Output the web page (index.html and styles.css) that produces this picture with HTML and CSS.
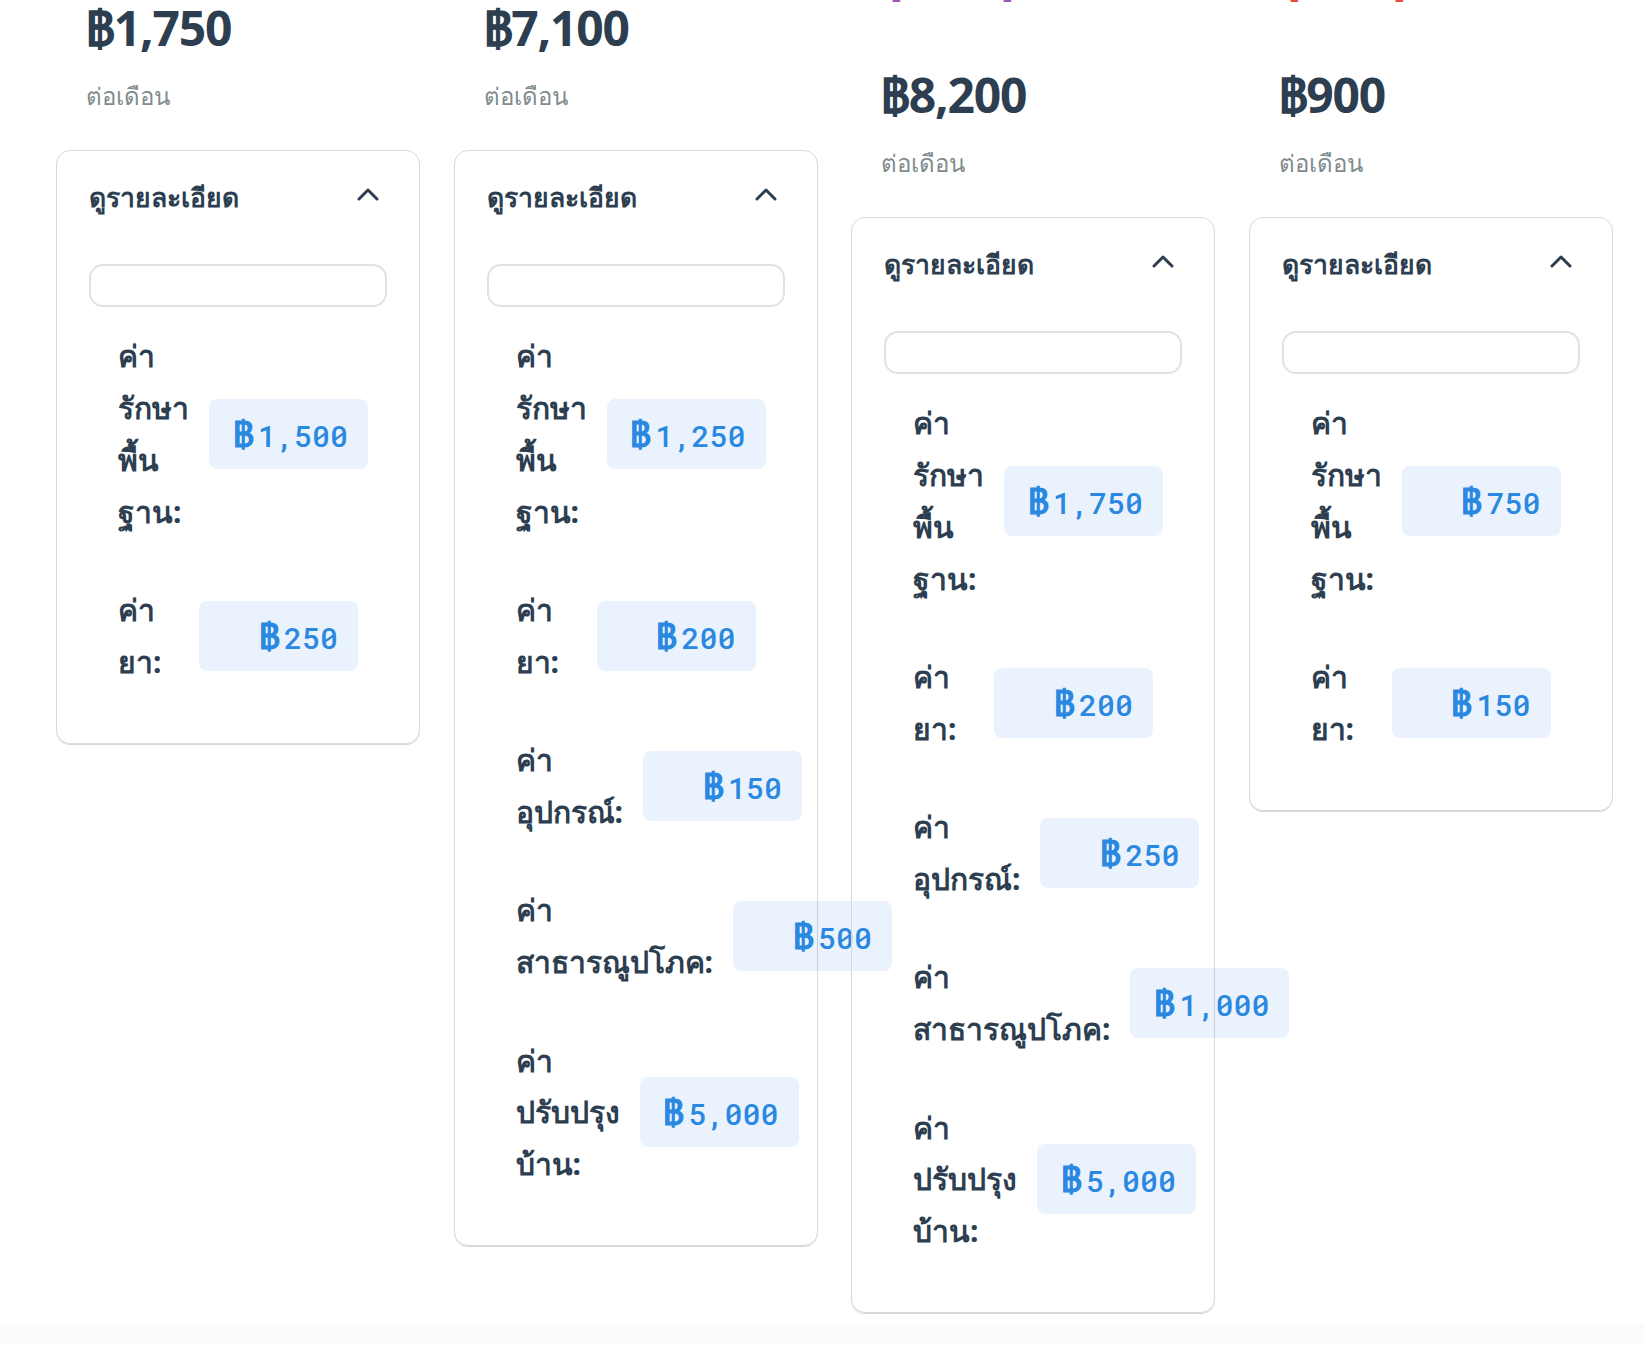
FILE: index.html
```html
<!DOCTYPE html>
<html lang="th">
<head>
<meta charset="utf-8">
<title>แพ็กเกจดูแล</title>
<link rel="stylesheet" href="styles.css">
</head>
<body>
<main class="board">
  <section class="plan">
    <div class="plan-top">
      <h3 class="plan-name name-blue">แพ็กเกจพื้นฐาน</h3>
      <div class="price">฿1,750</div>
      <div class="per">ต่อเดือน</div>
    </div>
    <div class="details">
      <div class="details-head"><span>ดูรายละเอียด</span><svg class="chev" width="22" height="14" viewBox="0 0 22 14"><polyline points="2,12 11,3 20,12" fill="none" stroke="#2c3e50" stroke-width="3" stroke-linecap="round" stroke-linejoin="round"/></svg></div>
      <div class="search"></div>
      <div class="row"><span class="label">ค่า รักษา พื้น ฐาน:</span><span class="value"><span class="cur">฿</span>1,500</span></div>
      <div class="row"><span class="label">ค่า ยา:</span><span class="value"><span class="cur">฿</span>250</span></div>
    </div>
  </section>

  <section class="plan">
    <div class="plan-top">
      <h3 class="plan-name name-green">แพ็กเกจครอบครัว</h3>
      <div class="price">฿7,100</div>
      <div class="per">ต่อเดือน</div>
    </div>
    <div class="details">
      <div class="details-head"><span>ดูรายละเอียด</span><svg class="chev" width="22" height="14" viewBox="0 0 22 14"><polyline points="2,12 11,3 20,12" fill="none" stroke="#2c3e50" stroke-width="3" stroke-linecap="round" stroke-linejoin="round"/></svg></div>
      <div class="search"></div>
      <div class="row"><span class="label">ค่า รักษา พื้น ฐาน:</span><span class="value"><span class="cur">฿</span>1,250</span></div>
      <div class="row"><span class="label">ค่า ยา:</span><span class="value"><span class="cur">฿</span>200</span></div>
      <div class="row"><span class="label">ค่า อุปกรณ์:</span><span class="value"><span class="cur">฿</span>150</span></div>
      <div class="row"><span class="label">ค่า สาธารณูปโภค:</span><span class="value"><span class="cur">฿</span>500</span></div>
      <div class="row"><span class="label">ค่า ปรับปรุง บ้าน:</span><span class="value"><span class="cur">฿</span>5,000</span></div>
    </div>
  </section>

  <section class="plan">
    <div class="plan-top">
      <div class="badge badge-purple">แนะนำ</div>
      <h3 class="plan-name name-purple">ดูแลเต็มรูปแบบ</h3>
      <div class="price">฿8,200</div>
      <div class="per">ต่อเดือน</div>
    </div>
    <div class="details">
      <div class="details-head"><span>ดูรายละเอียด</span><svg class="chev" width="22" height="14" viewBox="0 0 22 14"><polyline points="2,12 11,3 20,12" fill="none" stroke="#2c3e50" stroke-width="3" stroke-linecap="round" stroke-linejoin="round"/></svg></div>
      <div class="search"></div>
      <div class="row"><span class="label">ค่า รักษา พื้น ฐาน:</span><span class="value"><span class="cur">฿</span>1,750</span></div>
      <div class="row"><span class="label">ค่า ยา:</span><span class="value"><span class="cur">฿</span>200</span></div>
      <div class="row"><span class="label">ค่า อุปกรณ์:</span><span class="value"><span class="cur">฿</span>250</span></div>
      <div class="row"><span class="label">ค่า สาธารณูปโภค:</span><span class="value"><span class="cur">฿</span>1,000</span></div>
      <div class="row"><span class="label">ค่า ปรับปรุง บ้าน:</span><span class="value"><span class="cur">฿</span>5,000</span></div>
    </div>
  </section>

  <section class="plan">
    <div class="plan-top">
      <div class="badge badge-red">ประหยัด</div>
      <h3 class="plan-name name-red">ดูแลขั้นสูง</h3>
      <div class="price">฿900</div>
      <div class="per">ต่อเดือน</div>
    </div>
    <div class="details">
      <div class="details-head"><span>ดูรายละเอียด</span><svg class="chev" width="22" height="14" viewBox="0 0 22 14"><polyline points="2,12 11,3 20,12" fill="none" stroke="#2c3e50" stroke-width="3" stroke-linecap="round" stroke-linejoin="round"/></svg></div>
      <div class="search"></div>
      <div class="row"><span class="label">ค่า รักษา พื้น ฐาน:</span><span class="value"><span class="cur">฿</span>750</span></div>
      <div class="row"><span class="label">ค่า ยา:</span><span class="value"><span class="cur">฿</span>150</span></div>
    </div>
  </section>
</main>
</body>
</html>
```

FILE: styles.css
```css
html, body {
  margin: 0;
  padding: 0;
}

body {
  background: #fbfbfb;
  font-family: "Noto Sans", sans-serif;
  color: #2c3e50;
}

.board {
  background: #ffffff;
  margin-top: -108px;
  padding: 0 0 10px 56px;
  display: grid;
  grid-template-columns: repeat(4, 364px);
  column-gap: 33.5px;
  align-items: start;
}

.plan {
  display: flex;
  flex-direction: column;
}

.plan-top {
  padding-left: 30px;
  display: flex;
  flex-direction: column;
  align-items: flex-start;
}

.badge {
  height: 43px;
  line-height: 43px;
  padding: 0 18px;
  border-radius: 22px;
  margin-bottom: 24px;
  font-size: 20px;
  font-weight: 600;
  color: #ffffff;
}

.badge-purple { background: #9b59b6; }
.badge-red { background: #e74c3c; }

.plan-name {
  margin: 0 0 61px;
  font-size: 32px;
  line-height: 44px;
  font-weight: 700;
}

.name-blue { color: #3498db; }
.name-green { color: #27ae60; }
.name-purple { color: #9b59b6; }
.name-red { color: #e74c3c; }

.price {
  font-size: 48px;
  line-height: 56px;
  font-weight: 700;
  letter-spacing: -1.2px;
  color: #2c3e50;
  margin-top: 3px;
  margin-bottom: -3px;
}

.per {
  margin-top: 23px;
  font-size: 24px;
  line-height: 40px;
  color: #7f8c8d;
}

.details {
  margin-top: 34px;
  border: 1px solid #d9d9d9;
  border-radius: 14px;
  padding: 32px;
  box-shadow: 0 1px 0 #d6d6de;
}

.details-head {
  display: flex;
  justify-content: space-between;
  align-items: center;
  height: 28px;
  font-size: 26.5px;
  line-height: 28px;
  font-weight: 600;
  color: #2c3e50;
}

.chev {
  margin-right: 8px;
  margin-bottom: 6px;
}

.search {
  margin-top: 53px;
  height: 43px;
  box-sizing: border-box;
  border: 2px solid #e2e2e2;
  border-radius: 14px;
}

.row {
  display: flex;
  align-items: center;
  gap: 20px;
  padding: 23.4px 29px;
}

.label {
  font-size: 30px;
  line-height: 51.7px;
  font-weight: 700;
  color: #2c3e50;
}

.value {
  flex: none;
  width: 159px;
  height: 70px;
  box-sizing: border-box;
  padding-right: 20px;
  border-radius: 8px;
  background: rgba(45, 140, 240, 0.1);
  text-align: right;
  font-family: "Roboto Mono", "DejaVu Sans Mono", monospace;
  font-size: 30px;
  line-height: 70px;
  font-weight: 500;
  color: #2b88e0;
}

.cur {
  font-family: "Noto Sans", sans-serif;
  font-size: 35px;
  font-weight: 700;
  margin-right: 4px;
}
```
